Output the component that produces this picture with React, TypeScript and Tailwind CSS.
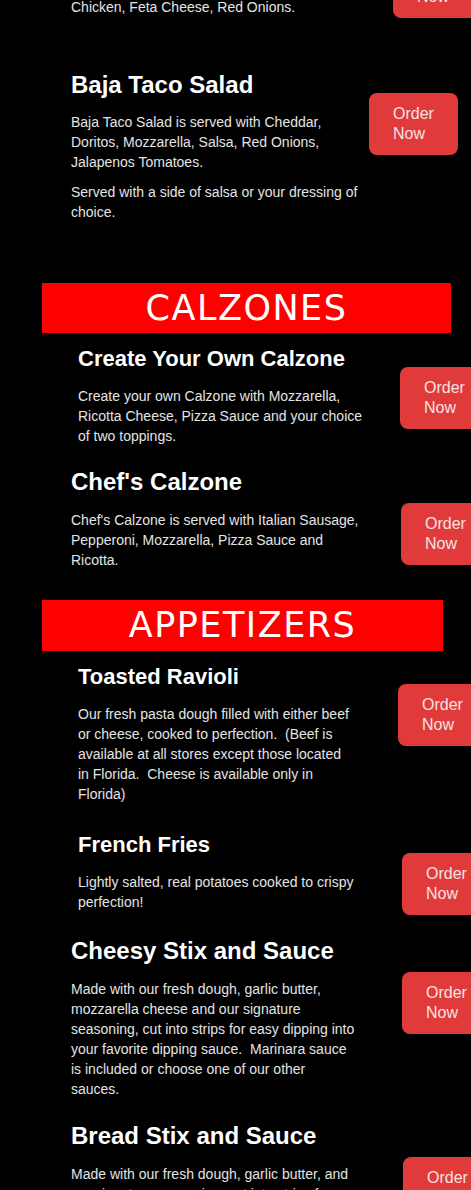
import React from "react";

type Item = {
  title: string;
  paragraphs: string[];
  rowCls: string; // margin above the row
  colCls: string; // indent + width of the text column, so the button follows it
  textCls: string; // wrapping width of the description
  big: boolean; // 24px vs 22px titles
  btnCls: string; // button drop below the title
};

function OrderButton({ className = "" }: { className?: string }) {
  return (
    <a
      href="#"
      className={`block w-[89px] shrink-0 rounded-lg bg-[#e03a3a] px-6 py-[11px] text-left text-base leading-5 text-[#f6e4e4] ${className}`}
    >
      Order Now
    </a>
  );
}

function Row({ item }: { item: Item }) {
  return (
    <div className={`flex items-start ${item.rowCls}`}>
      <div className={`shrink-0 ${item.colCls}`}>
        <h3 className={`font-bold leading-7 text-white ${item.big ? "text-2xl" : "text-[22px]"}`}>
          {item.title}
        </h3>
        <div className={`mt-[13px] ${item.textCls}`}>
          {item.paragraphs.map((p, i) => (
            <p
              key={i}
              className={`whitespace-pre-wrap text-sm leading-5 text-[#e4e4e4] ${i > 0 ? "mt-[10px]" : ""}`}
            >
              {p}
            </p>
          ))}
        </div>
      </div>
      <OrderButton className={item.btnCls} />
    </div>
  );
}

function SectionBar({ label, className }: { label: string; className: string }) {
  return (
    <div
      className={`ml-[42px] flex items-center justify-center bg-[#ff0000] font-['DejaVu_Sans','Noto_Sans',sans-serif] text-[35px] tracking-[1.5px] text-white ${className}`}
    >
      {label}
    </div>
  );
}

const baja: Item = {
  title: "Baja Taco Salad",
  paragraphs: [
    "Baja Taco Salad is served with Cheddar, Doritos, Mozzarella, Salsa, Red Onions, Jalapenos Tomatoes.",
    "Served with a side of salsa or your dressing of choice.",
  ],
  rowCls: "mt-[53px]",
  colCls: "ml-[71px] w-[298px]",
  textCls: "w-[292px]",
  big: true,
  btnCls: "mt-[22px]",
};

const calzones: Item[] = [
  {
    title: "Create Your Own Calzone",
    paragraphs: [
      "Create your own Calzone with Mozzarella, Ricotta Cheese, Pizza Sauce and your choice of two toppings.",
    ],
    rowCls: "mt-[12px]",
    colCls: "ml-[78px] w-[322px]",
    textCls: "w-[290px]",
    big: false,
    btnCls: "mt-[22px]",
  },
  {
    title: "Chef's Calzone",
    paragraphs: [
      "Chef's Calzone is served with Italian Sausage, Pepperoni, Mozzarella, Pizza Sauce and Ricotta.",
    ],
    rowCls: "mt-[22px]",
    colCls: "ml-[71px] w-[330px]",
    textCls: "mt-[14px] w-[295px]",
    big: true,
    btnCls: "mt-[35px]",
  },
];

const appetizers: Item[] = [
  {
    title: "Toasted Ravioli",
    paragraphs: [
      "Our fresh pasta dough filled with either beef or cheese, cooked to perfection.  (Beef is available at all stores except those located in Florida.  Cheese is available only in Florida)",
    ],
    rowCls: "mt-[12px]",
    colCls: "ml-[78px] w-[320px]",
    textCls: "w-[274px]",
    big: false,
    btnCls: "mt-[21px]",
  },
  {
    title: "French Fries",
    paragraphs: ["Lightly salted, real potatoes cooked to crispy perfection!"],
    rowCls: "mt-[27px]",
    colCls: "ml-[78px] w-[324px]",
    textCls: "w-[280px]",
    big: false,
    btnCls: "mt-[22px]",
  },
  {
    title: "Cheesy Stix and Sauce",
    paragraphs: [
      "Made with our fresh dough, garlic butter, mozzarella cheese and our signature seasoning, cut into strips for easy dipping into your favorite dipping sauce.  Marinara sauce is included or choose one of our other sauces.",
    ],
    rowCls: "mt-[22px]",
    colCls: "ml-[71px] w-[331px]",
    textCls: "mt-[14px] w-[286px]",
    big: true,
    btnCls: "mt-[35px]",
  },
  {
    title: "Bread Stix and Sauce",
    paragraphs: [
      "Made with our fresh dough, garlic butter, and our signature seasoning, cut into strips for easy dipping into your favorite dipping sauce.  Marinara sauce is included or choose one of our other sauces.",
    ],
    rowCls: "mt-[23px]",
    colCls: "ml-[71px] w-[332px]",
    textCls: "mt-[14px] w-[286px]",
    big: true,
    btnCls: "mt-[35px]",
  },
];

export default function App() {
  return (
    <div className="min-h-[1190px] w-full overflow-hidden bg-black pb-10 font-['Liberation_Sans',Arial,sans-serif]">
      {/* tail end of the previous salad, scrolled mostly out of view */}
      <div className="-mt-[44px] flex items-start">
        <p className="ml-[71px] mt-[41px] w-[322px] shrink-0 text-sm leading-5 text-[#e4e4e4]">
          Chicken, Feta Cheese, Red Onions.
        </p>
        <OrderButton />
      </div>

      <Row item={baja} />

      <SectionBar label="CALZONES" className="mt-[61px] h-[50px] w-[409px]" />
      {calzones.map((it) => (
        <Row key={it.title} item={it} />
      ))}

      <SectionBar label="APPETIZERS" className="mt-[30px] h-[51px] w-[401px]" />
      {appetizers.map((it) => (
        <Row key={it.title} item={it} />
      ))}
    </div>
  );
}
